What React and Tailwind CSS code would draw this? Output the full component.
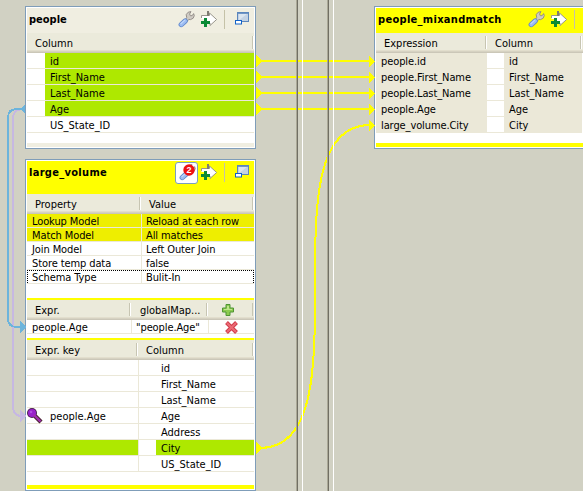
import React from "react";

const SANS = "font-['DejaVu_Sans_Condensed','DejaVu_Sans',sans-serif] [font-stretch:condensed]";

function Wrench() {
  return (
    <svg width="18" height="18" viewBox="0 0 18 18">
      <path d="M8.5 8.5L9.7 6.6L9.2 3.6L11.2 1.2L14 0.6L12.6 3L13.4 4.8L15.2 4.6L16.6 2.6L17.3 4.6L16.2 7.2L13.6 8.6L11.8 8.4L10.4 10Z" fill="#cfcbc4" stroke="#8d8782" strokeWidth="0.9" />
      <path d="M4.2 13.6L8.2 10" stroke="#6088cc" strokeWidth="5.2" strokeLinecap="round" />
      <path d="M4.2 13.6L8.2 10" stroke="#9dbdf2" strokeWidth="3.6" strokeLinecap="round" />
      <path d="M4 12.6L7.6 9.4" stroke="#c4d9fb" strokeWidth="1.2" strokeLinecap="round" />
    </svg>
  );
}

function AddArrow() {
  return (
    <svg className="-mt-px" width="18" height="18" viewBox="0 0 18 18">
      <path d="M1.5 5.5H9.5V3L16.6 9.5L9.5 15.5V12.5H5V9H1.5Z" fill="#fff" />
      <path d="M1.5 8V5.5H9.5V3L16.6 9.5L10 15.5V13" fill="none" stroke="#99968d" />
      <path d="M8 1V6" stroke="#7f7c73" strokeWidth="2" />
      <path d="M5.5 8V17M1 12.5H10" stroke="#0a8a35" strokeWidth="3" />
    </svg>
  );
}

function Restore() {
  return (
    <svg width="15" height="14" viewBox="0 0 15 14">
      <rect x="2.5" y="0.5" width="11" height="9" fill="#c3d2e4" stroke="#5c86bd" />
      <path d="M3 9L12 2H4V9Z" fill="#dbe5f0" />
      <path d="M2 1H14" stroke="#5c86bd" strokeWidth="1.6" />
      <rect x="0.5" y="8.5" width="6" height="3.5" fill="#fff" stroke="#1262c8" />
    </svg>
  );
}

function T({ children, l = 0, className = "" }) {
  return <span className={"whitespace-pre " + className} style={{ paddingLeft: l }}>{children}</span>;
}

function Tools({ badge }) {
  return (
    <div className="flex items-start pt-[3px]">
      {badge ? (
        <div className="relative -mt-[2px] mr-[2px] flex h-[22px] w-[23px] items-center justify-center rounded-[3px] border border-[#7b9ebd] bg-white">
          <Wrench />
          <svg className="absolute right-[2px] top-[1px]" width="12" height="12" viewBox="0 0 12 12">
            <circle cx="6" cy="6" r="5.7" fill="#ee1111" />
            <text x="6" y="9.2" textAnchor="middle" fill="#fff" fontFamily="Liberation Sans" fontWeight="bold" fontSize="9">2</text>
          </svg>
        </div>
      ) : (
        <div className="mr-[5px]"><Wrench /></div>
      )}
      <AddArrow />
      <div className="ml-[6px] mt-[-1px] h-[19px] w-px bg-[#c5c2a8]" />
      <div className="ml-[10px] mt-[1px]"><Restore /></div>
    </div>
  );
}

function Head({ h, children }) {
  return (
    <div className="flex shrink-0 border-b border-[#cbc7b8] bg-[#ebeadb] shadow-[inset_0_-1px_0_#d6d2c2,inset_0_-2px_0_#e2decd]" style={{ height: h }}>
      {children}
    </div>
  );
}

function HCell({ w, l, children }) {
  return (
    <div className="flex items-center" style={{ width: w }}>
      <T l={l} className="min-w-0 flex-1 pt-[2px]">{children}</T>
      <div className="h-[13px] w-[2px] border-l border-r border-l-[#c7c5b2] border-r-white" />
    </div>
  );
}

const COLS = ["id", "First_Name", "Last_Name", "Age", "US_State_ID"];
const PROPS = [
  ["Lookup Model", "Reload at each row"],
  ["Match Model", "All matches"],
  ["Join Model", "Left Outer Join"],
  ["Store temp data", "false"],
  ["Schema Type", "Bulit-In"],
];
const OUT = [
  ["people.id", "id"],
  ["people.First_Name", "First_Name"],
  ["people.Last_Name", "Last_Name"],
  ["people.Age", "Age"],
  ["large_volume.City", "City"],
];
const LOOKUP = ["id", "First_Name", "Last_Name", "Age", "Address", "City", "US_State_ID"];

function Panel({ className, children }) {
  return <div className={"flex shrink-0 flex-col border border-[#7f9db9] bg-white p-px " + className}>{children}</div>;
}

function Key() {
  return (
    <svg width="16" height="16" viewBox="0 0 16 16">
      <path d="M8 8L14 14" stroke="#4a2030" strokeWidth="4.4" />
      <circle cx="5" cy="5" r="5" fill="#4a2050" />
      <circle cx="5" cy="5" r="4" fill="#9a22cc" />
      <path d="M7 7L13.5 13.5" stroke="#a030b0" strokeWidth="2.4" />
      <circle cx="4" cy="4" r="1.3" fill="#b050e0" />
    </svg>
  );
}

function Wires() {
  return (
    <svg className="pointer-events-none absolute left-0 top-0" width="583" height="491" viewBox="0 0 583 491" shapeRendering="crispEdges">
      <g stroke="#ff0" strokeWidth="2" fill="none">
        {[61, 77, 93, 109].map((y) => <path key={y} d={`M260 ${y}H370`} />)}
        <path d="M260 448C370 448 260 125 370 125" />
      </g>
      <g fill="#ff0">
        {[61, 77, 93, 109, 448].map((y) => <path key={y} d={`M256 ${y - 6}L262 ${y}L256 ${y + 6}Z`} />)}
        {[61, 77, 93, 109, 125].map((y) => <path key={y} d={`M369 ${y - 5}L375 ${y + 0.5}L369 ${y + 6}Z`} />)}
      </g>
      <g fill="none" strokeWidth="2">
        <path d="M25 109H22Q13 110 13 118V406Q13 416 22 416" stroke="#c6b8e2" />
        <path d="M25 109H17Q8 109 8 118V318Q8 327 17 327H21" stroke="#6cb4dc" />
      </g>
      <path d="M25 104L20 109L25 114ZM20 321L26 327L20 333Z" fill="#6cb4dc" />
      <path d="M20 410L26 416L20 422Z" fill="#c6b8e2" />
    </svg>
  );
}

function Sash() {
  return (
    <div className="relative flex w-[7px] shrink-0 justify-between">
      <div className="w-[2px] border-l border-[#aaa896] bg-[#716f64]" />
      <div className="w-px bg-white" />
    </div>
  );
}

export default function App() {
  return (
    <div className={"relative flex h-[491px] w-[583px] overflow-hidden bg-[#d1d1c3] text-[11px] leading-[16px] text-black " + SANS}>
      <Wires />
      <div className="flex w-[271px] shrink-0 flex-col gap-[10px] pl-[25px] pt-[6px]">
        <Panel className="h-[143px] w-[231px]">
          <div className="flex h-[25px] shrink-0 justify-between bg-[#f0eee1] pr-[4px]">
            <T l={2} className="pt-[4px] font-bold">people</T>
            <Tools />
          </div>
          <Head h={20}><HCell w={227} l={8}>Column</HCell></Head>
          {COLS.map((c, i) => (
            <div key={c} className="flex h-[16px] shrink-0 border-b border-[#ebe8d8] pl-[18px]">
              <div className={"h-[15px] flex-1 pl-[5px] pt-px " + (i < 4 ? "bg-[#aee800]" : "")}>{c}</div>
            </div>
          ))}
          <div className="mt-[10px] h-[4px] shrink-0 bg-[#f0eee1]" />
        </Panel>
        <Panel className="h-[332px] w-[231px]">
          <div className="flex h-[33px] shrink-0 justify-between bg-[#ff0] pr-[4px]">
            <T l={2} className="pt-[4px] font-bold tracking-[0.3px]">large_volume</T>
            <Tools badge />
          </div>
          <Head h={20}><HCell w={114} l={8}>Property</HCell><HCell w={113} l={8}>Value</HCell></Head>
          {PROPS.map(([a, b], i) => (
            <div key={a} className={"relative flex h-[14px] shrink-0 border-b border-[#ebe8d8] tracking-[-0.1px] " + (i < 2 ? "bg-[#eeee00]" : "")}>
              <div className="w-[115px] border-r border-[#ebe8d8] pl-[5px]">{a}</div>
              <div className="pl-[4px]">{b}</div>
              {i === 4 && <div className="absolute inset-0 border border-b-0 border-dotted border-black" />}
            </div>
          ))}
          <div className="mt-[14px] h-[2px] shrink-0 bg-[#ff0]" />
          <Head h={20}>
            <HCell w={104} l={8}>Expr.</HCell>
            <HCell w={77} l={9}>globalMap...</HCell>
            <div className="flex w-[46px] items-center justify-between pl-[13px]">
              <svg width="14" height="14" viewBox="0 0 14 14"><path d="M5 1.5H9V5H12.5V9H9V12.5H5V9H1.5V5H5Z" fill="#8ccb50" stroke="#4f9434" /><path d="M6 3H8V6H11V7H3V6H6Z" fill="#bfe58c" /></svg>
              <div className="h-[13px] w-[2px] border-l border-[#c7c5b2]" />
            </div>
          </Head>
          <div className="flex h-[14px] shrink-0 border-b border-[#ebe8d8]">
            <div className="w-[105px] border-r border-[#ebe8d8] pl-[5px]">people.Age</div>
            <div className="w-[77px] border-r border-[#ebe8d8] pl-[4px] tracking-[-0.1px]">"people.Age"</div>
            <svg className="ml-[15px] mt-px" width="15" height="13" viewBox="0 0 15 13"><path d="M2.5 1.5L12.5 11.5M12.5 1.5L2.5 11.5" stroke="#d03c4a" strokeWidth="4" /><path d="M3 2L12 11M12 2L3 11" stroke="#ec6a74" strokeWidth="2" /></svg>
          </div>
          <div className="mt-[4px] h-[2px] shrink-0 bg-[#ff0]" />
          <Head h={20}><HCell w={111} l={8}>Expr. key</HCell><HCell w={116} l={8}>Column</HCell></Head>
          {LOOKUP.map((c, i) => (
            <div key={c} className="flex h-[16px] shrink-0 border-b border-[#ebe8d8]">
              <div className={"flex w-[112px] border-r border-[#ebe8d8] " + (i === 5 ? "bg-[#aee800]" : "")}>
                {i === 3 && <><Key /><span className="pl-[7px] pt-px">people.Age</span></>}
              </div>
              <div className={"ml-[17px] h-[15px] flex-1 pl-[5px] pt-px " + (i === 5 ? "bg-[#aee800]" : "")}>{c}</div>
            </div>
          ))}
          <div className="mt-[13px] h-[4px] shrink-0 bg-[#ff0]" />
        </Panel>
      </div>
      <div className="flex w-[103px] shrink-0 gap-[24px] pl-[25px]"><Sash /><Sash /></div>
      <div className="flex flex-col pt-[6px]">
        <Panel className="h-[143px] w-[211px]">
          <div className="flex h-[25px] shrink-0 bg-[#ff0]">
            <T l={2} className="w-[150px] shrink-0 pt-[4px] font-bold tracking-[0.3px]">people_mixandmatch</T>
            <div className="shrink-0 pl-[1px]"><Tools /></div>
          </div>
          <Head h={20}><HCell w={111} l={8}>Expression</HCell><HCell w={95} l={8}>Column</HCell></Head>
          {OUT.map(([a, b]) => (
            <div key={a} className="flex h-[16px] w-[206px] shrink-0 bg-[#ebe8d8]">
              <div className="w-[111px] pl-[5px] pt-px tracking-[-0.1px]">{a}</div>
              <div className="h-[15px] w-[17px] bg-white" />
              <div className="pl-[5px] pt-px">{b}</div>
            </div>
          ))}
          <div className="mt-[10px] h-[4px] shrink-0 bg-[#ff0]" />
        </Panel>
      </div>
    </div>
  );
}
